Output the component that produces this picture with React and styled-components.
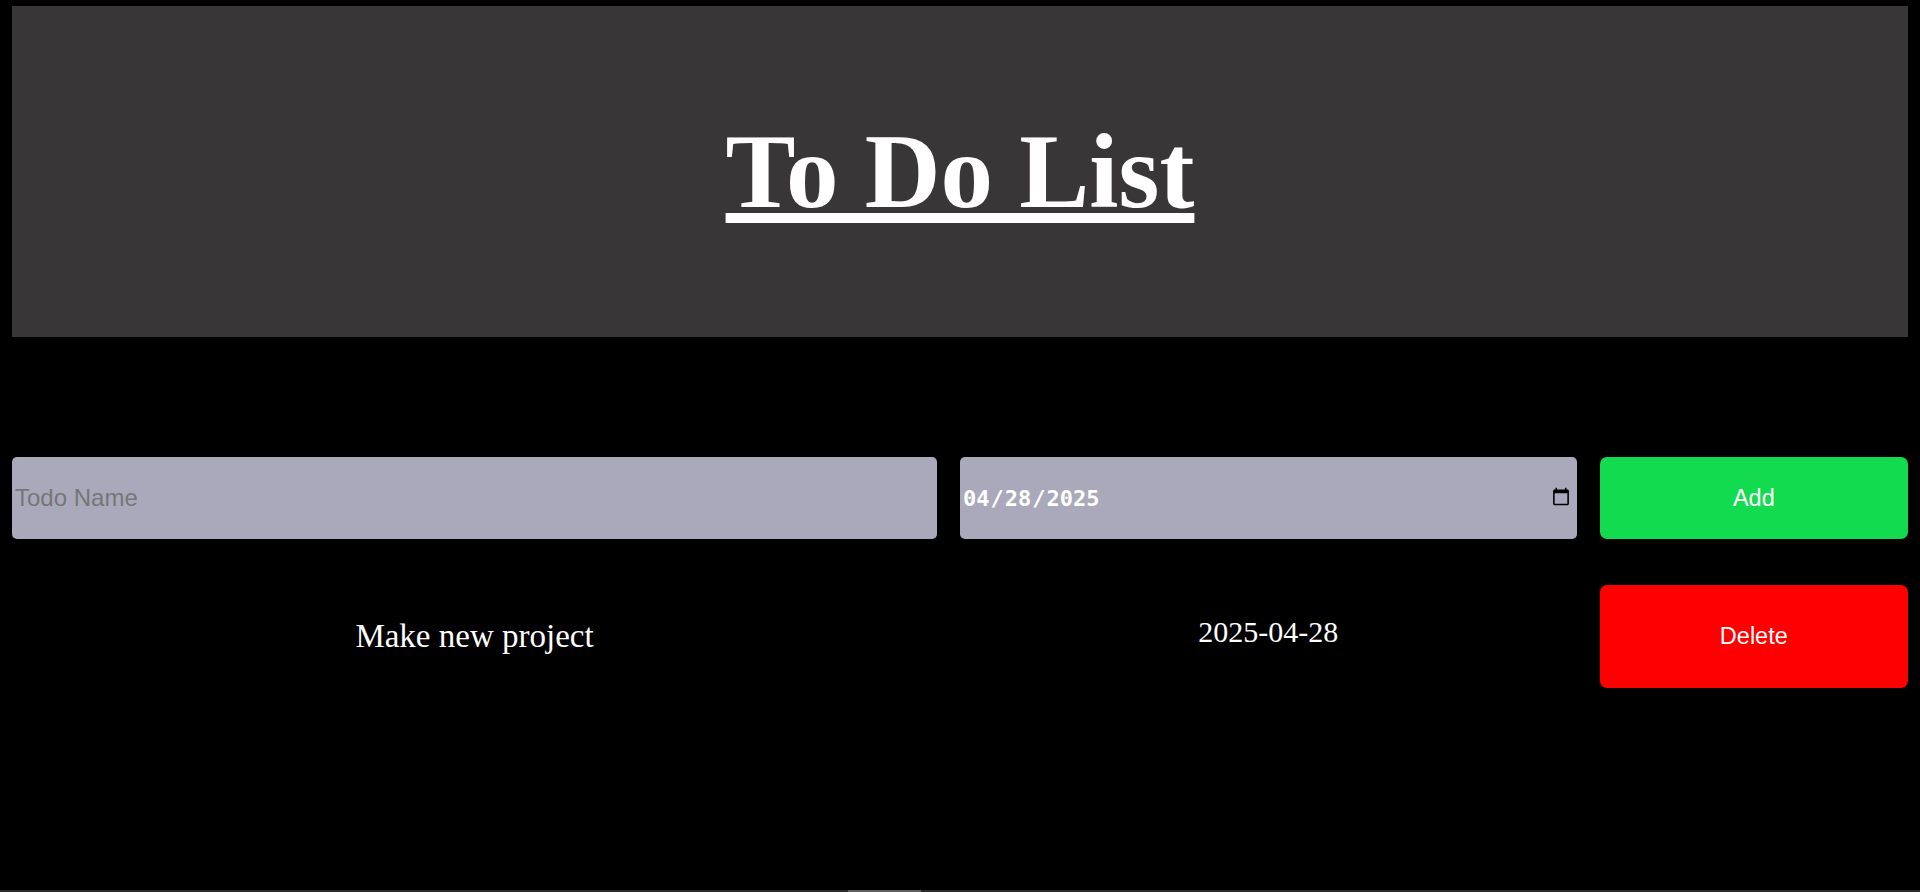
import React, { useState } from "react";
import styled, { createGlobalStyle } from "styled-components";

const GlobalStyle = createGlobalStyle`
	html, body {
		margin: 0;
		background-color: #000;
	}
	body {
		font-family: "Liberation Serif", "Times New Roman", serif;
	}
`;

const Page = styled.div`
	padding: 6px 12px 0;
	min-height: 886px;
	box-sizing: border-box;
`;

const Banner = styled.header`
	display: flex;
	justify-content: center;
	align-items: center;
	height: 331px;
	background-color: #393637;
`;

const Title = styled.h1`
	margin: 0;
	color: #fff;
	font-size: 105px;
	font-weight: bold;
	text-decoration: underline;
	text-decoration-thickness: 10px;
	text-underline-offset: 6px;
`;

const Grid = styled.div`
	display: grid;
	grid-template-columns: 6fr 4fr 2fr;
	column-gap: 23px;
	align-items: start;
	margin-top: ${(p) => p.$top}px;
`;

const Field = styled.input`
	height: 82px;
	box-sizing: border-box;
	border: none;
	border-radius: 5px;
	padding: 0 3px;
	background-color: #aaa9bb;
	font-family: "Liberation Sans", Arial, sans-serif;
	font-size: 24px;
	color: #333;
	outline: none;
	&::placeholder {
		color: #767676;
	}
`;

const DateField = styled(Field)`
	font-family: "DejaVu Sans Mono", monospace;
	font-weight: bold;
	font-size: 22px;
	color: #fff;
	padding: 0 6px 0 2px;
	&::-webkit-calendar-picker-indicator {
		width: 20px;
		height: 22px;
		padding: 0;
		margin: 0;
	}
`;

const Button = styled.button`
	height: ${(p) => p.$height}px;
	border: none;
	border-radius: 7px;
	background-color: ${(p) => p.$bg};
	color: #fff;
	font-family: "Liberation Sans", Arial, sans-serif;
	font-size: 23.5px;
	cursor: pointer;
`;

const Cell = styled.div`
	text-align: center;
	color: #fff;
	line-height: 1;
	font-size: ${(p) => p.$size}px;
	padding-top: ${(p) => p.$pad}px;
`;

const ScrollTrack = styled.div`
	position: fixed;
	left: 0;
	right: 0;
	bottom: 0;
	height: 2px;
	background-color: #2b2b2b;
`;

const ScrollThumb = styled.div`
	margin-left: 848px;
	width: 73px;
	height: 2px;
	background-color: #5f5f5f;
`;

const App = () => {
	const [todos, setTodos] = useState([
		{ id: 1, name: "Make new project", date: "2025-04-28" },
	]);
	const [name, setName] = useState("");
	const [date, setDate] = useState("2025-04-28");

	// add a todo
	const addTodo = () => {
		if (!name) return;
		setTodos([...todos, { id: Date.now(), name, date }]);
		setName("");
	};

	return (
		<Page>
			<GlobalStyle />
			<Banner>
				<Title>To Do List</Title>
			</Banner>
			<Grid $top={120}>
				<Field
					type="text"
					placeholder="Todo Name"
					value={name}
					onChange={(e) => setName(e.target.value)}
				/>
				<DateField
					type="date"
					value={date}
					onChange={(e) => setDate(e.target.value)}
				/>
				<Button $bg="#13db4f" $height={82} onClick={addTodo}>
					Add
				</Button>
			</Grid>
			{todos.map((t) => (
				<Grid $top={46} key={t.id}>
					<Cell $size={33} $pad={35}>
						{t.name}
					</Cell>
					<Cell $size={30} $pad={32}>
						{t.date}
					</Cell>
					<Button
						$bg="#ff0000"
						$height={103}
						onClick={() => setTodos(todos.filter((x) => x.id !== t.id))}
					>
						Delete
					</Button>
				</Grid>
			))}
			<ScrollTrack>
				<ScrollThumb />
			</ScrollTrack>
		</Page>
	);
};

export default App;
